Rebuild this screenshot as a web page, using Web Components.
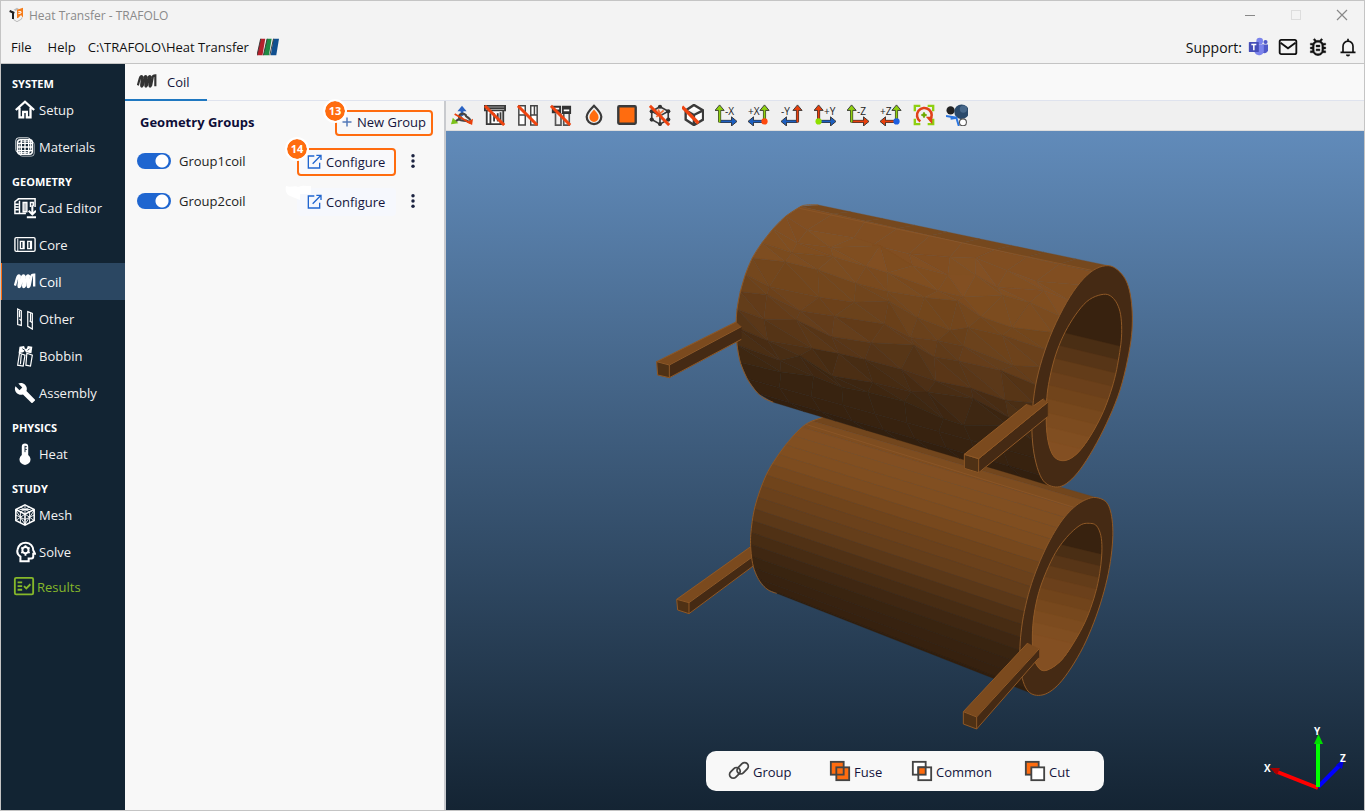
<!DOCTYPE html>
<html lang="en">
<head>
<meta charset="utf-8">
<title>Heat Transfer - TRAFOLO</title>
<style>
  html, body { height: 100%; margin: 0; }
  body { font-family: "Open Sans", "Noto Sans", sans-serif; font-size: 13px; color: #111; background: #f3f3f3; }
</style>
</head>
<body>
<app-window></app-window>
<script>
const ORANGE = '#ff6c0f';
const SLASH = '<path d="M1 2 22 23" stroke="#ef4410" stroke-width="3.2" fill="none"/>';
const arrow = (c, d, head) => `<path d="${d}" stroke="#333" stroke-width="3.4" fill="none"/><path d="${head}" fill="${c}" stroke="#333" stroke-width="1"/><path d="${d}" stroke="${c}" stroke-width="2" fill="none"/>`;
const G = '#8fd011', B = '#1d5fc0', R = '#e8400c';
/* Axis view icons: two arrows in an L shape, with the name of the axis in the free corner */
const axisL = (up, side, label, dot) => arrow(side, 'M5 19H19', 'M18 14 24 19 18 24Z') + arrow(up, 'M5 20V5', 'M0 7 5 1 10 7Z') +
  (dot ? `<circle cx="5" cy="19" r="3.4" fill="${dot}"/>` : '') + `<text x="11" y="12">${label}</text>`;
const axisR = (up, side, label, dot) => arrow(side, 'M18 19H5', 'M6 14 0 19 6 24Z') + arrow(up, 'M18 20V5', 'M13 7 18 1 23 7Z') +
  (dot ? `<circle cx="18" cy="19" r="3.4" fill="${dot}"/>` : '') + `<text x="0" y="12">${label}</text>`;
const COIL = '<path d="M1 16C2 13 3 8 4 6c1-2 3-1 2 1L5 16c0 2 1 2 2 0L9 6c1-2 3-1 2 1l-1 9c0 2 1 2 2 0l2-10c1-2 3-1 2 1l-1 9c0 2 1 2 2 0l2-10c0-1 1-2 3-2v13" fill="none" stroke="currentColor" stroke-width="2.6"/>';

const ICONS = {
  logo: '<path d="M1 5 7 8v2L4 9Z" fill="#222"/><path d="M1 6l7 3M6 8v10" stroke="#222" stroke-width="3"/><path d="M7 4 12 1l3 2-5 3Z" fill="#bbb"/><path d="M12 4 21 1v15l-3-4-4 4-2 1Z" fill="#f57c1a"/><path d="M14 7h4v2l-4 1" stroke="#fff" fill="none" stroke-width="1.5"/><path d="M7 18v1l5 3 7-4v-2" fill="none" stroke="#bbb" stroke-width="1.5"/>',
  paraview: '<path d="M4 3h5L6 21H0Z" fill="#b5202c"/><path d="M11 3h5l-3 18H7Z" fill="#1f8a44"/><path d="M18 3h6l-3 18h-6Z" fill="#104f8f"/><path d="M4 3 0 21M11 3 7 21M18 3l-4 18" stroke="#333" stroke-width="1"/>',
  teams: '<circle cx="14" cy="5" r="4" fill="#7b83eb"/><circle cx="21" cy="6" r="2.5" fill="#5059c9"/><path d="M17 9h7v7a4 4 0 0 1-7 2Z" fill="#5059c9"/><path d="M8 9h11v8a6 6 0 0 1-11 2Z" fill="#7b83eb"/><rect x="1" y="6" width="12" height="12" rx="1" fill="#464eb8"/><path d="M4 9h6M7 9v7" stroke="#fff" stroke-width="1.8"/>',
  mail: '<rect x="2" y="3.500" width="20" height="17" rx="2" fill="none" stroke="#111" stroke-width="2.200"/><path d="m3 7 9 6.500L21 7" fill="none" stroke="#111" stroke-width="2.200"/>',
  bug: '<path d="M20 8h-2.810a6 6 0 0 0-1.820-2L17 4.400 15.600 3l-2.200 2.200a6 6 0 0 0-2.800 0L8.400 3 7 4.400 8.600 6a6 6 0 0 0-1.800 2H4v2h2.100L6 12H4v2h2l.1 2H4v2h2.800a6 6 0 0 0 10.400 0H20v-2h-2.100l.1-2h2v-2h-2l-.1-2H20ZM16 15a4 4 0 0 1-8 0v-4a4 4 0 0 1 8 0Zm-6-1h4v2h-4Zm0-4h4v2h-4Z" fill="#111" stroke="#111" stroke-width=".4" fill-rule="evenodd" transform="translate(-1.800 -1.800) scale(1.150)"/>',
  bell: '<path d="M6 18v-7a6 6 0 0 1 12 0v7M3 18.500h18M12 2v3" fill="none" stroke="#111" stroke-width="2"/><path d="M9.500 21h5a2.500 2.500 0 0 1-5 0Z" fill="#111"/>',
  home: '<path d="M2 12 12 3l10 9M6 9.500V20h4v-6h4v6h4V9.500" fill="none" stroke="#fff" stroke-width="2.500"/>',
  materials: '<g fill="none" stroke="#fff"><rect x="2" y="2" width="16" height="16" rx="3"/><rect x="6" y="6" width="16" height="16" rx="3" stroke-opacity=".7"/><rect x="4" y="4" width="16" height="16" rx="3" stroke-width="1.600"/><path d="M8 4v16M12 4v16M16 4v16M4 8h16M4 12h16M4 16h16" stroke-width="1.500"/></g>',
  cad: '<g fill="none" stroke="#fff" stroke-width="1.600"><path d="M4 2h19v9M5 2 1 5v13h12M1 8h4M1 11h4M1 14h4M6 4v14M10 6h4v10h-4ZM12 6v10M18 11V6h3v4"/><path d="M20 9v9M16 15l4 4 4-4M14 22h10" stroke-width="2.200"/></g>',
  core: '<g fill="none" stroke="#fff" stroke-width="1.500"><rect x="1" y="4" width="22" height="15" rx="1.500"/><path d="M7 8h4v8H7ZM10 8v8M15 8h4v8h-4ZM18 8v8"/><path d="M4 5v14" stroke-opacity=".7"/></g>',
  coil: COIL,
  other: '<g fill="none" stroke="#fff" stroke-width="1.300"><path d="m4 1 4 2v16l-4-1ZM6 3v7M6 12l2 2"/><path d="m15 4 5 2v17l-5-3ZM18 6v8M17 14l3 2" /></g>',
  bobbin: '<g fill="none" stroke="#fff" stroke-width="1.300"><path d="M6 9 4 22l6 1 2-12ZM14 9l-1 13 5 1 2-12ZM8 10 7 21"/></g><path d="m6 2 5-1 1 3h2l1-3 5 1-1 7-6-1-1-2-2 2-5 1Z" fill="#fff"/><path d="m9 4 3 2m5-2-2 2" stroke="#122433"/>',
  wrench: '<path d="M22.700 19 13.600 9.900c.9-2.300.4-5-1.500-6.900-2-2-5-2.400-7.400-1.300L9 6 6 9 1.600 4.700C.4 7.100.9 10.100 2.900 12.100c1.900 1.900 4.600 2.400 6.900 1.500l9.100 9.100c.4.400 1 .4 1.400 0l2.300-2.300c.5-.4.500-1.100.1-1.400Z" fill="#fff"/>',
  heat: '<path d="M8.500 4a3.500 3.500 0 0 1 7 0v9a6 6 0 1 1-7 0Z" fill="#fff"/><path d="M12 3v7M12 4h2M12 7h2" stroke="#122433" stroke-width="1"/>',
  mesh: '<g fill="none" stroke="#fff" stroke-width="1.700"><path d="m12 1 10 5v12l-10 5-10-5V6ZM2 6l10 5 10-5M12 11v12"/><path d="m7 3.500 10 5M17 3.500l-10 5M2 12l10 5 10-5M7 8.500v12M17 8.500v12M2 7l10 15M22 7 12 22M12 11 2 18M12 11l10 7M12 2v8M6 6h12" stroke-width="1"/></g>',
  solve: '<path d="M7 22v-5C4 15 3 12 4 9c1-4 4-7 9-7 5 0 8 4 8 8l2 4h-2v3c0 1-1 2-2 2h-3v3Z" fill="none" stroke="#fff" stroke-width="2.200"/><circle cx="12.500" cy="10" r="3.400" fill="none" stroke="#fff" stroke-width="2.200"/><path d="M12.500 4.500v3M12.500 13v3M8 7l2 1.500M15 11.500l2 1.500M8 13l2-1.500M15 8.500 17 7" stroke="#fff" stroke-width="2"/>',
  results: '<g fill="none" stroke="#86b82a" stroke-width="2"><rect x="2" y="2" width="20" height="18" rx="1.500"/><path d="M5 7h5M5 11h5M5 15h5M12 11l2.500 2.500L19 9"/></g>',
  open: '<g fill="none" stroke="#2166cf" stroke-width="2"><path d="M11 3H2v18h17v-8M14 2h7v7M21 2 8.500 14.500"/></g>',
  plus: '<path d="M12 3v18M3 12h18" stroke="#5379b8" stroke-width="3"/>',
  dots: '<g fill="#1b2340"><circle cx="12" cy="4" r="2.600"/><circle cx="12" cy="12" r="2.600"/><circle cx="12" cy="20" r="2.600"/></g>',
  min: '<path d="M7 12.500h10" stroke="#888" stroke-width="1"/>',
  max: '<rect x="7.500" y="7.500" width="9" height="9" fill="none" stroke="#ddd" stroke-width="1"/>',
  close: '<path d="m7 7 10 10M17 7 7 17" stroke="#888" stroke-width="1.200"/>',
  triad: '<path d="M12 13V6" stroke="#2a63c4" stroke-width="3"/><path d="m7 8 5-6 5 6Z" fill="#2a63c4"/><path d="M9 15c-1-4 4-6 7-3 0 3 4 2 5 6M12 14l-7 5M9 17c3 2 6 0 10 2" stroke="#444" stroke-width="2.500" fill="none"/><path d="m0 22 2-7 6 6Z" fill="#7bc21a"/><path d="m4 11 17 10" stroke="#e8400c" stroke-width="2"/><path d="m24 16-1 7-6-3Z" fill="#e8400c"/>',
  coreHide: '<g fill="#fff" stroke="#3a3a3a" stroke-width="2"><path d="M3 7h18v15H3ZM1 2h22v5H1Z"/><path d="M1 4.500h22M7 10v12M11 10v9M15 10v9M18 9v13" fill="none"/></g>' + SLASH,
  otherHide: '<g fill="#fff" stroke="#444" stroke-width="1.600"><path d="M2 2h7v21H2ZM2 12h7M15 2h7v10h-7ZM15 12h7v11h-7ZM19 2v10"/></g>' + SLASH,
  bobbinHide: '<path d="M2 2h10v8H2ZM13 2h10v9H13Z" fill="#333"/><path d="M6 10v13h6V10M15 11v12h6V11" stroke="#555" stroke-width="1.800" fill="none"/><path d="M5 5h5M15 7h6" stroke="#fff" stroke-width="2"/>' + SLASH,
  drop: `<path d="M12 2c4 4 8 8 8 12a8 8 0 0 1-16 0c0-4 4-8 8-12Z" fill="#eee" stroke="#3a3a3a" stroke-width="2.400"/><path d="M12 6c2 2.500 5 5 5 8.500a5 5 0 0 1-10 0C7 11 10 8.500 12 6Z" fill="${ORANGE}"/>`,
  square: `<rect x="2.500" y="2.500" width="19" height="19" rx="1" fill="${ORANGE}" stroke="#3a3a3a" stroke-width="2.600"/>`,
  nodesHide: '<path d="m12 3 9 5v9l-9 5-9-5V8ZM3 8l9 5 9-5M12 13v9" fill="none" stroke="#3a3a3a" stroke-width="1.800"/><g fill="#333"><circle cx="12" cy="3" r="2.300"/><circle cx="21" cy="8" r="2.300"/><circle cx="21" cy="17" r="2.300"/><circle cx="12" cy="22" r="2"/><circle cx="3" cy="17" r="2.300"/><circle cx="3" cy="8" r="2.300"/></g><path d="m8 14 8-7M10 6l5 11" stroke="#f0703a" stroke-width="2"/>' + SLASH,
  cubeHide: '<path d="m13 1 10 6v10l-10 6-9-6V7ZM4 7l9 5 10-5M13 12v10" fill="#fff" stroke="#3a3a3a" stroke-width="2.600"/><path d="M0 3 18 21" stroke="#ef4410" stroke-width="3.600"/>',
  mx: axisL(G, B, '-X'), px: axisR(G, B, '+X', '#ff4a0f'), my: axisR(R, B, '-Y'), py: axisL(R, B, '+Y', '#8fe000'),
  mz: axisL(G, R, '-Z'), pz: axisR(G, R, '+Z', '#1d5fe0'),
  fit: '<path d="M2 8V2h6M16 2h6v6M22 16v6h-6M8 22H2v-6" fill="none" stroke="#8fd011" stroke-width="2.600"/><path d="M8 19a8 8 0 1 1 10-1" fill="none" stroke="#e0421a" stroke-width="2.800"/><path d="M14 14h7v8Z" fill="#e0421a"/><path d="m12 9 1 2 2 1-2 1-1 2-1-2-2-1 2-1Z" fill="#6ba900" stroke="#6ba900"/>',
  spheres: '<circle cx="5" cy="7" r="4.500" fill="#222"/><circle cx="17" cy="8.500" r="8" fill="#2b4a6b"/><circle cx="19" cy="5.500" r="4" fill="#47688a"/><path d="m0 13 12 2M12 15 5 16M11 14l3 10" stroke="#2a75e0" stroke-width="2.200"/><circle cx="18.500" cy="20" r="3.800" fill="#fff" stroke="#555" stroke-width="1.200"/>',
  link: '<g fill="none" stroke="#444" stroke-width="2"><rect x="1" y="10" width="13" height="8" rx="4" transform="rotate(-45 7.500 14)"/><rect x="9" y="5" width="14" height="8" rx="4" transform="rotate(-45 16 9)"/></g>',
  fuse: `<g fill="${ORANGE}" stroke="#444" stroke-width="2"><rect x="2" y="2" width="14" height="14"/><rect x="8" y="8" width="14" height="14"/><path d="M8 16h8V8" fill="none"/></g>`,
  common: `<g fill="#fff" stroke="#444" stroke-width="2"><rect x="2" y="2" width="14" height="14"/><rect x="8" y="8" width="14" height="14"/><rect x="8" y="8" width="8" height="8" fill="${ORANGE}"/></g>`,
  cut: `<g fill="${ORANGE}" stroke="#444" stroke-width="2"><rect x="2" y="2" width="14" height="14"/><rect x="8" y="8" width="14" height="14" fill="#fff"/></g>`
};

/* Base for all elements: renders the class's css and html into an open shadow root */
class Base extends HTMLElement {
  constructor() { super(); this.attachShadow({ mode: 'open' }); }
  connectedCallback() {
    const t = document.createElement('template');
    t.innerHTML = `<style>*{box-sizing:border-box}button{font:inherit;color:inherit;background:none;border:0;padding:0;margin:0;cursor:pointer}${this.css()}</style>${this.html()}`;
    this.shadowRoot.replaceChildren(t.content.cloneNode(true));
  }
  css() { return ':host{display:block}'; }
  html() { return '<slot></slot>'; }
}
const define = (name, css, html) => customElements.define(name, class extends Base {
  css() { return css; }
  html() { return typeof html === 'function' ? html(this) : html; }
});

define('ui-icon', `:host{display:block;flex:none;width:var(--size,20px);height:var(--size,20px)}
  svg{display:block;width:100%;height:100%} text{font:11px "Open Sans",sans-serif;fill:#222}`,
  el => `<svg viewBox="0 0 24 24" aria-hidden="true">${ICONS[el.getAttribute('name')]}</svg>`);

define('app-window', `:host{display:flex;flex-direction:column;height:100vh;box-sizing:border-box;border:1px solid #c4c4c4;background:#f3f3f3}
  main{flex:1;display:flex;min-height:0}
  .work{flex:1;display:flex;flex-direction:column;min-width:0}
  .split{flex:1;display:flex;min-height:0}
  .scene{flex:1;display:flex;flex-direction:column;min-width:0}`,
  `<title-bar></title-bar><menu-bar></menu-bar>
  <main><side-nav></side-nav>
    <div class="work"><tab-strip></tab-strip>
      <div class="split"><group-panel></group-panel>
        <div class="scene"><view-toolbar></view-toolbar><model-view><action-bar></action-bar></model-view></div>
      </div>
    </div>
  </main>`);

define('title-bar', `:host{display:flex;align-items:center;height:28px;padding:0 10px 0 8px;color:#8a8a8a;font-size:12px}
  ui-icon{--size:16px} span{flex:1;padding-left:4px} .win{display:flex;gap:22px} .win ui-icon{--size:24px}`,
  `<ui-icon name="logo"></ui-icon><span>Heat Transfer - TRAFOLO</span>
  <div class="win"><button aria-label="Minimize"><ui-icon name="min"></ui-icon></button><button aria-label="Maximize"><ui-icon name="max"></ui-icon></button><button aria-label="Close"><ui-icon name="close"></ui-icon></button></div>`);

define('menu-bar', `:host{display:flex;align-items:center;height:35px;padding:2px 6px 0 10px;box-sizing:border-box;border-bottom:1px solid #c4c4c4;font-size:13px;color:#111}
  nav{display:flex;gap:16px;margin-right:12px} .path{flex:1;display:flex;align-items:center;gap:8px} .path ui-icon{--size:22px}
  .support{display:flex;align-items:center;gap:10px;font-size:14px} .support span{margin-right:-4px} .support ui-icon{--size:20px}`,
  `<nav><button>File</button><button>Help</button></nav>
  <div class="path"><span>C:\\TRAFOLO\\Heat Transfer</span><ui-icon name="paraview"></ui-icon></div>
  <div class="support"><span>Support:</span><button aria-label="Teams"><ui-icon name="teams"></ui-icon></button><button aria-label="Mail"><ui-icon name="mail"></ui-icon></button><button aria-label="Report a bug"><ui-icon name="bug"></ui-icon></button><button aria-label="Notifications"><ui-icon name="bell"></ui-icon></button></div>`);

define('nav-heading', `:host{display:block;padding:10px 0 0 11px;font-size:11px;line-height:14px;font-weight:700;color:#fff}`, '<slot></slot>');
define('nav-item', `:host{display:block} a{display:flex;align-items:center;gap:3px;height:37px;padding-left:12px;color:#f2f2f2;text-decoration:none;border-left:1px solid transparent}
  :host([active]) a{background:#2b4762;border-left-color:#ff6c0f;color:#fff}
  :host([done]) a{color:#86b82a;height:34px;gap:2px;padding-left:11px} ui-icon{--size:22px;color:#fff}`,
  el => `<a href="#${el.getAttribute('icon')}"><ui-icon name="${el.getAttribute('icon')}"></ui-icon><span><slot></slot></span></a>`);
define('side-nav', `:host{display:block;flex:none;width:124px;padding-top:3px;box-sizing:border-box;background:#122433;font-size:13px}`,
  `<nav-heading>SYSTEM</nav-heading><nav-item icon="home">Setup</nav-item><nav-item icon="materials">Materials</nav-item>
  <nav-heading>GEOMETRY</nav-heading><nav-item icon="cad">Cad Editor</nav-item><nav-item icon="core">Core</nav-item><nav-item icon="coil" active>Coil</nav-item><nav-item icon="other">Other</nav-item><nav-item icon="bobbin">Bobbin</nav-item><nav-item icon="wrench">Assembly</nav-item>
  <nav-heading>PHYSICS</nav-heading><nav-item icon="heat">Heat</nav-item>
  <nav-heading>STUDY</nav-heading><nav-item icon="mesh">Mesh</nav-item><nav-item icon="solve">Solve</nav-item><nav-item icon="results" done>Results</nav-item>`);

define('tab-strip', `:host{display:flex;flex:none;height:37px;box-sizing:border-box;background:#f9f9f9;border-bottom:1px solid #dfe3ee}
  button{display:flex;align-items:center;gap:10px;height:37px;width:82px;padding:0 12px;border-bottom:2px solid #1f78c1;color:#14143c}
  ui-icon{--size:20px;color:#333}`,
  `<button role="tab" aria-selected="true"><ui-icon name="coil"></ui-icon><span>Coil</span></button>`);

define('step-badge', `:host{position:absolute;left:-12px;top:-11px;width:20px;height:20px;border-radius:50%;box-sizing:border-box;background:#ff6c0f;color:#fff;outline:2px solid #fff;font-size:11px;line-height:20px;font-weight:700;text-align:center}`, '<slot></slot>');

define('group-row', `:host{display:flex;align-items:center;height:40px}
  input{appearance:none;flex:none;width:34px;height:16px;margin:0;border-radius:8px;background:radial-gradient(circle at 25px 8px,#fff 6px,#1f66d0 7px)}
  label{flex:1;padding-left:8px;color:#222}
  .cfg{position:relative;display:flex;align-items:center;gap:3px;width:99px;height:28px;margin-top:2px;padding-left:8px;border:2px solid transparent;border-radius:4px;color:#14143c;background:#f6f8fd;font-weight:500}
  :host([step]) .cfg{border-color:#ff6c0f;background:#f9f9fb}
  .cfg ui-icon{--size:16px} .more{margin-left:9px} .more ui-icon{--size:16px}
  .glow{position:absolute;left:-14px;top:-5px;width:28px;height:18px}`,
  el => `<input type="checkbox" id="on" checked><label for="on">${el.getAttribute('name')}</label>
  <button class="cfg"><ui-icon name="open"></ui-icon><span>Configure</span>${el.hasAttribute('step') ? `<step-badge>${el.getAttribute('step')}</step-badge>` : '<svg class="glow" viewBox="0 0 28 18"><path d="M1 1c5 2 9-1 12 1 4-2 9-1 13-1v8H15v6L5 11C1 9 0 5 1 1Z" fill="#fff"/></svg>'}</button>
  <button class="more" aria-label="More"><ui-icon name="dots"></ui-icon></button>`);

define('group-panel', `:host{display:block;flex:none;width:321px;box-sizing:border-box;border-right:2px solid #c8cace;background:#f8f8f8;padding:0 23px 0 12px}
  header{display:flex;align-items:center;justify-content:space-between;height:40px;padding:3px 0 0 3px;margin-right:-12px}
  h2{margin:0;padding-bottom:2px;font-size:13px;font-weight:700;color:#0e0e38}
  header button{position:relative;display:flex;align-items:center;gap:4px;width:98px;height:26px;padding:0 0 2px 4px;border:2px solid #ff6c0f;border-radius:4px;color:#14143c;font-weight:500;white-space:nowrap}
  header ui-icon{--size:12px}`,
  `<header><h2>Geometry Groups</h2><button><ui-icon name="plus"></ui-icon><span>New Group</span><step-badge>13</step-badge></button></header>
  <group-row name="Group1coil" step="14"></group-row><group-row name="Group2coil"></group-row>`);

const TOOLS = [['triad', 'Axes'], ['coreHide', 'Hide core'], ['otherHide', 'Hide other'], ['bobbinHide', 'Hide bobbin'], ['drop', 'Opacity'], ['square', 'Surface'], ['nodesHide', 'Hide nodes'], ['cubeHide', 'Hide edges'],
  ['mx', 'View -X'], ['px', 'View +X'], ['my', 'View -Y'], ['py', 'View +Y'], ['mz', 'View -Z'], ['pz', 'View +Z'], ['fit', 'Reset camera'], ['spheres', 'Lighting']];
define('view-toolbar', `:host{display:flex;flex:none;height:30px;box-sizing:border-box;background:#f0f0f0;border-bottom:1px solid #ddd}
  button{display:flex;align-items:center;justify-content:center;width:33px;padding:0 1px 1px 0} ui-icon{--size:22px}`,
  TOOLS.map(([i, l]) => `<button aria-label="${l}"><ui-icon name="${i}"></ui-icon></button>`).join(''));

define('action-bar', `:host{position:absolute;left:50%;bottom:19px;transform:translateX(-50%);display:grid;grid-template-columns:101px 82px 113px auto;align-items:center;width:398px;height:40px;padding:0 22px;box-sizing:border-box;border-radius:10px;background:#f8f8f8;color:#14143c;font-weight:500}
  button{display:flex;align-items:center;gap:3px} ui-icon{--size:22px} span{padding-top:2px}`,
  [['link', 'Group'], ['fuse', 'Fuse'], ['common', 'Common'], ['cut', 'Cut']].map(([i, l]) => `<button><ui-icon name="${i}"></ui-icon><span>${l}</span></button>`).join(''));

/* ---- Coil geometry, in units of a third of a pixel ---- */
const P = s => s.trim().split(/\s+/).map(p => p.split(',').map(Number));
const f = n => n.toFixed(1);
const poly = p => 'M' + p.map(q => f(q[0]) + ' ' + f(q[1])).join('L');
/* Catmull-Rom curve sampled through a list of points */
function curve(pts, closed) {
  const n = pts.length, out = [], at = i => closed ? pts[(i + n) % n] : pts[Math.max(0, Math.min(n - 1, i))];
  for (let i = 0; i < (closed ? n : n - 1); i++) {
    const [a, b, c, d] = [at(i - 1), at(i), at(i + 1), at(i + 2)];
    for (let k = 0; k < 6; k++) { const t = k / 6;
      out.push([0, 1].map(j => .5 * (2 * b[j] + (c[j] - a[j]) * t + (2 * a[j] - 5 * b[j] + 4 * c[j] - d[j]) * t * t + (3 * b[j] - a[j] - 3 * c[j] + d[j]) * t * t * t)));
    }
  }
  if (!closed) out.push(pts[n - 1]);
  return out;
}
function resample(pts, n) {
  const len = [0];
  for (let i = 1; i < pts.length; i++) len.push(len[i - 1] + Math.hypot(pts[i][0] - pts[i - 1][0], pts[i][1] - pts[i - 1][1]));
  return Array.from({ length: n + 1 }, (_, k) => {
    const s = len[len.length - 1] * k / n; let i = 1;
    while (i < len.length - 1 && len[i] < s) i++;
    const t = (s - len[i - 1]) / (len[i] - len[i - 1]);
    return [0, 1].map(j => pts[i - 1][j] + (pts[i][j] - pts[i - 1][j]) * t);
  });
}
const RAMP = [[0, 104, 63, 26], [.05, 122, 75, 31], [.12, 130, 79, 34], [.28, 128, 78, 32], [.42, 112, 68, 27], [.54, 100, 61, 26], [.64, 80, 49, 21], [.74, 64, 40, 18], [.82, 56, 35, 16], [.94, 54, 33, 15], [1, 44, 27, 12]];
function shade(t, d = 0) {
  t = Math.max(0, Math.min(1, t)); let i = 1; while (RAMP[i][0] < t) i++;
  const a = RAMP[i - 1], b = RAMP[i], k = (t - a[0]) / (b[0] - a[0]);
  return `rgb(${[1, 2, 3].map(j => Math.round(a[j] + (b[j] - a[j]) * k + d)).join()})`;
}
const face = (p, c) => `<path d="${poly(p)}Z" fill="${c}" stroke="${c}" stroke-width="1"/>`;
let seed = 7; const rnd = () => (seed = (seed * 16807) % 2147483647) / 2147483647 - .5;
function body(left, right, rows, cols, jitter) {
  const L = resample(curve(left), rows), Q = resample(curve(right), rows); let s = '';
  const grid = L.map((a, r) => Array.from({ length: cols + 1 }, (_, c) => {
    const t = c / cols, b = Q[r], edge = r < 2 || r > rows - 3 || !c || c === cols, j = edge ? 0 : jitter;
    return [a[0] + (b[0] - a[0]) * t + rnd() * j * 1.5, a[1] + (b[1] - a[1]) * t + rnd() * j];
  }));
  for (let r = 0; r < rows; r++) for (let c = 0; c < cols; c++) {
    const [p, q, u, v] = [grid[r][c], grid[r][c + 1], grid[r + 1][c + 1], grid[r + 1][c]], t = (r + .5) / rows;
    if (!jitter || r < 2 || r > rows - 4) s += face([p, q, u, v], shade(t));
    else { s += face([p, q, u], shade(t + rnd() * .04, rnd() * 3)); s += face([p, u, v], shade(t + rnd() * .04, rnd() * 3)); }
  }
  return s;
}
const EDGE = 'fill="none" stroke="#8f5826" stroke-width="3"';
const line = p => `<path d="${poly(p)}" ${EDGE}/>`;
const crease = d => `<path d="${d}" fill="none" stroke="#90592a" stroke-width="2"/>`;
function ring(id, outer, inner, top, step, count) {
  const o = poly(curve(outer, true)) + 'Z', i = poly(curve(inner, true)) + 'Z'; let s = `<clipPath id="${id}"><path d="${i}"/></clipPath><path d="${o}" fill="#452a14"/><g clip-path="url(#${id})"><path d="${i}" fill="#38220f"/>`;
  const C = ['#4a2e14', '#573517', '#633c19', '#6b401b', '#71441b', '#77481d', '#7c4b1f', '#804e21', '#834f22', '#7c4b20'];
  for (let k = 0; k < count; k++) { const y = top + k * step; s += face([[1000, y - 105], [1500, y + 15], [1500, 1200], [1000, 1200]], C[k]); }
  return s + `</g><path d="${i}" ${EDGE}/><path d="${o}" ${EDGE}/>`;
}
function lead(a, b, c, d, e, g, h) {
  return face([a, b, c, d], '#7b4a1e') + face([b, c, e, g], '#452a14') + face([a, b, g, h], '#4f3115') +
    line([d, a, b, c]) + line([a, h, g, e]) + line([b, g]);
}
function model() {
  const l1 = P('535,45 500,45 478,52 430,85 380,140 335,208 305,290 290,370 290,450 302,520 330,580 365,620 400,637');
  const r1 = P('1405,227 1380,232 1350,248 1290,320 1230,440 1205,510 1190,570 1180,640 1176,720 1180,790 1205,865 1225,884 1240,890');
  const o1 = P('1405,227 1445,252 1468,300 1477,380 1470,470 1440,600 1390,720 1330,825 1280,880 1240,890 1205,865 1182,790 1176,690 1190,570 1230,440 1290,320 1350,248');
  const i1 = P('1390,313 1420,325 1440,365 1445,430 1437,500 1420,580 1390,665 1350,740 1310,792 1272,812 1240,797 1222,740 1219,650 1228,570 1252,480 1290,400 1340,335');
  const l2 = P('550,52 497,73 445,125 395,195 368,250 345,320 334,385 332,440 340,500 360,545 385,570 410,580');
  const r2 = P('1370,293 1340,298 1302,322 1260,370 1215,450 1175,550 1150,650 1140,740 1143,815 1160,868 1190,886');
  const o2 = P('1370,293 1400,308 1415,350 1418,420 1405,520 1375,630 1330,740 1275,830 1230,875 1190,886 1160,868 1143,815 1140,740 1150,650 1175,550 1215,450 1260,370 1302,322 1340,298');
  const i2 = P('1348,370 1370,378 1384,415 1384,480 1370,565 1340,655 1300,730 1260,785 1215,812 1190,795 1178,750 1180,660 1200,565 1240,470 1280,412 1320,376');
  return `<g transform="translate(640 400) scale(.33333)">` +
    lead(...P('110,598 147,608 345,465 335,438 345,494 147,641 113,630')) +
    body(l2, r2, 18, 1, 0) + line(curve(l2)) + crease('M497 73 1302 322') + ring('bore2', o2, i2, 476, 36, 9) +
    lead(...P('970,935 1010,951 1197,747 1163,729 1197,773 1010,987 970,972')) + `</g>
    <g transform="translate(640 190) scale(.33333)">` +
    body(l1, r1, 14, 9, 44) + line(curve(l1)) + crease('M478 55 1355 241') + ring('bore1', o1, i1, 468, 42, 9) +
    lead(...P('50,515 88,525 304,410 288,396 304,448 88,563 53,555')) +
    lead(...P('973,793 1016,806 1223,637 1210,627 1223,680 1016,848 973,835')) +
    face(P('973,793 1016,806 1200,655 1160,643'), '#7b4a1e') + line(P('973,793 1160,643')) + line(P('973,793 1016,806 1223,637')) + `</g>`;
}
define('model-view', `:host{position:relative;display:block;flex:1;min-height:0;overflow:hidden;background:linear-gradient(#618bba,#142433)}
  .model{position:absolute;inset:0;width:100%;height:100%} .axes{position:absolute;right:4px;bottom:10px;width:110px;height:80px}
  .axes text{font:700 10px "Open Sans",sans-serif;fill:#fff}`,
  () => `<svg class="model" viewBox="446 131 918 679" role="img" aria-label="Two coils">${model()}</svg>
  <svg class="axes" viewBox="1250 720 110 80" role="img" aria-label="Axes">
    <path d="M1318 787 1341 764" stroke="#00f" stroke-width="4"/><path d="m1336 765 8-6-2 10Z" fill="#00d"/>
    <path d="m1318 788-43-17" stroke="#f00" stroke-width="4"/><path d="m1270 768 10 0-3 7Z" fill="#a00"/>
    <path d="M1318 787v-45" stroke="#0f0" stroke-width="4"/><path d="m1314 744 4.500-10 4.500 10Z" fill="#0d0"/>
    <text x="1264" y="772">X</text><text x="1314" y="735">Y</text><text x="1340" y="762">Z</text></svg><slot></slot>`);
</script>
</body>
</html>
